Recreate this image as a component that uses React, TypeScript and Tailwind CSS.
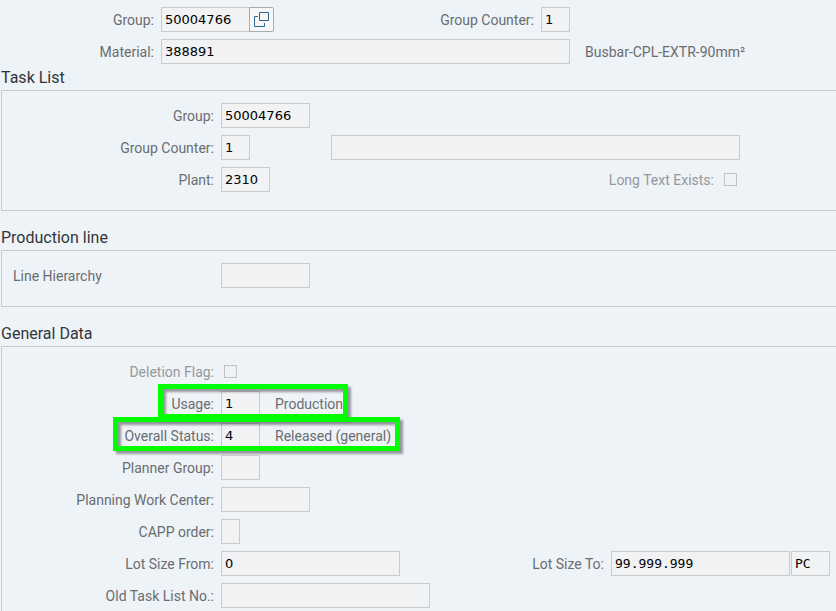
import type { ReactNode } from "react";
import clsx from "clsx";

type FieldProps = {
  id: string;
  width: string;
  value?: string;
  mono?: boolean;
  label?: string;
};

function Field({ id, width, value = "", mono, label }: FieldProps) {
  return (
    <input
      id={id}
      type="text"
      readOnly
      aria-label={label}
      defaultValue={value}
      className={clsx(
        "h-[25px] shrink-0 border border-[#c8cacb] bg-[#f1f2f3] px-[3px] text-[13px] text-black outline-none",
        mono
          ? "font-['DejaVu_Sans_Mono',monospace]"
          : "font-['DejaVu_Sans',sans-serif]",
        width
      )}
    />
  );
}

type LabelProps = {
  htmlFor: string;
  width: string;
  muted?: boolean;
  children: ReactNode;
};

function Label({ htmlFor, width, muted, children }: LabelProps) {
  return (
    <label
      htmlFor={htmlFor}
      className={clsx(
        "shrink-0 pr-[7px] text-right whitespace-nowrap",
        muted && "text-[#95989b]",
        width
      )}
    >
      {children}
    </label>
  );
}

function Row({ children }: { children: ReactNode }) {
  return <div className="relative flex h-[25px] items-center">{children}</div>;
}

function Checkbox({ id }: { id: string }) {
  return (
    <input
      id={id}
      type="checkbox"
      disabled
      className="ml-[3px] size-[13px] shrink-0 appearance-none border border-[#bfc1c3] bg-[#f1f2f3]"
    />
  );
}

function Highlight({ className }: { className: string }) {
  return (
    <span
      aria-hidden="true"
      className={clsx(
        "pointer-events-none absolute border-[5px] border-[#00ff00] drop-shadow-[3px_3px_1px_rgba(60,60,70,0.5)]",
        className
      )}
    />
  );
}

type SectionProps = {
  title: string;
  className?: string;
  children: ReactNode;
};

function Section({ title, className, children }: SectionProps) {
  return (
    <section className={clsx("flex flex-col pl-px", className)}>
      <h2 className="h-6 text-base leading-6 text-[#32363a]">{title}</h2>
      <div className="flex grow flex-col gap-[7px] border-y border-l border-[#c8cacb] pt-3 pb-[18px]">
        {children}
      </div>
    </section>
  );
}

export default function App() {
  return (
    <main className="flex min-h-screen flex-col overflow-x-hidden bg-[#eef3f8] font-['Roboto',sans-serif] text-sm text-[#6a6d70]">
      <header className="flex flex-col gap-[7px] pt-[7px] pb-[2px]">
        <Row>
          <Label htmlFor="group" width="w-[161px]">Group:</Label>
          <Field id="group" width="w-[89px]" value="50004766" />
          <button
            type="button"
            aria-label="Choose group"
            className="-ml-px flex h-[25px] w-[25px] items-center justify-center rounded-r-xs border border-[#a9abad] bg-[#f7f7f7]"
          >
            <svg width="15" height="15" viewBox="0 0 15 15" fill="none" stroke="#2f6690">
              <path d="M5.5 .5h9v8h-9z" />
              <path d="M4 4.5H.5v10h10V11" />
            </svg>
          </button>
          <Label htmlFor="counter" width="w-[267px]">Group Counter:</Label>
          <Field id="counter" width="w-[29px]" value="1" />
        </Row>
        <Row>
          <Label htmlFor="material" width="w-[161px]">Material:</Label>
          <Field id="material" width="w-[409px]" value="388891" />
          <span className="ml-[15px] whitespace-nowrap">Busbar-CPL-EXTR-90mm²</span>
        </Row>
      </header>

      <Section title="Task List">
        <Row>
          <Label htmlFor="task-group" width="w-[219px]">Group:</Label>
          <Field id="task-group" width="w-[89px]" value="50004766" />
        </Row>
        <Row>
          <Label htmlFor="task-counter" width="w-[219px]">Group Counter:</Label>
          <Field id="task-counter" width="w-[29px]" value="1" />
          <span className="w-[81px] shrink-0" />
          <Field id="task-text" width="w-[409px]" label="Description" />
        </Row>
        <Row>
          <Label htmlFor="plant" width="w-[219px]">Plant:</Label>
          <Field id="plant" width="w-[49px]" value="2310" />
          <Label htmlFor="long-text" width="w-[451px]" muted>Long Text Exists:</Label>
          <Checkbox id="long-text" />
        </Row>
      </Section>

      <Section title="Production line" className="mt-[15px]">
        <Row>
          <label htmlFor="hierarchy" className="w-[219px] shrink-0 pl-[11px]">
            Line Hierarchy
          </label>
          <Field id="hierarchy" width="w-[89px]" />
        </Row>
      </Section>

      <Section title="General Data" className="mt-[15px] grow">
        <Row>
          <Label htmlFor="deletion" width="w-[219px]" muted>Deletion Flag:</Label>
          <Checkbox id="deletion" />
        </Row>
        <Row>
          <Label htmlFor="usage" width="w-[219px]">Usage:</Label>
          <Field id="usage" width="w-[39px]" value="1" />
          <span className="ml-[15px]">Production</span>
          <Highlight className="-top-[7px] left-[156px] h-[35px] w-[190px]" />
        </Row>
        <Row>
          <Label htmlFor="status" width="w-[219px]">Overall Status:</Label>
          <Field id="status" width="w-[39px]" value="4" />
          <span className="ml-[15px]">Released (general)</span>
          <Highlight className="-top-[6px] left-[111px] h-[34px] w-[287px]" />
        </Row>
        <Row>
          <Label htmlFor="planner" width="w-[219px]">Planner Group:</Label>
          <Field id="planner" width="w-[39px]" />
        </Row>
        <Row>
          <Label htmlFor="work-center" width="w-[219px]">Planning Work Center:</Label>
          <Field id="work-center" width="w-[89px]" />
        </Row>
        <Row>
          <Label htmlFor="capp" width="w-[219px]">CAPP order:</Label>
          <Field id="capp" width="w-[19px]" />
        </Row>
        <Row>
          <Label htmlFor="lot-from" width="w-[219px]">Lot Size From:</Label>
          <Field id="lot-from" width="w-[179px]" value="0" />
          <Label htmlFor="lot-to" width="w-[211px]">Lot Size To:</Label>
          <Field id="lot-to" width="w-[179px]" value="99.999.999" mono />
          <span className="w-px shrink-0" />
          <Field id="unit" width="w-[39px]" value="PC" mono label="Unit" />
        </Row>
        <Row>
          <Label htmlFor="old-number" width="w-[219px]">Old Task List No.:</Label>
          <Field id="old-number" width="w-[209px]" />
        </Row>
      </Section>
    </main>
  );
}
